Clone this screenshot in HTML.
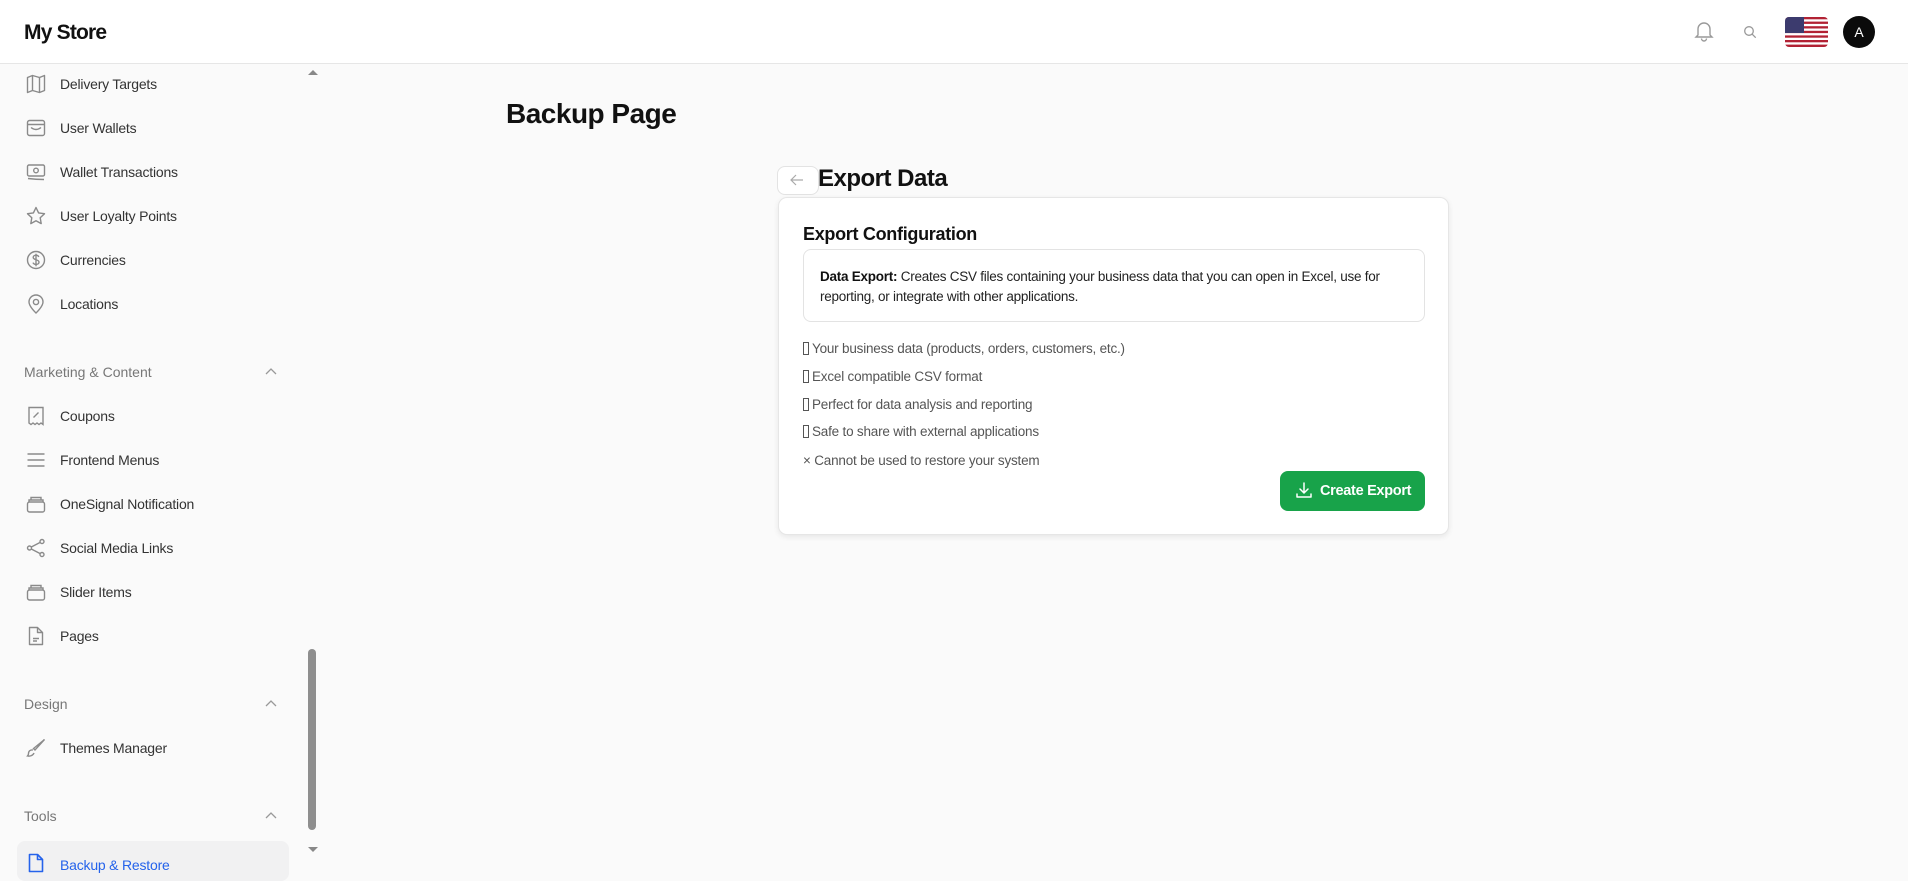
<!DOCTYPE html>
<html><head><meta charset="utf-8"><style>
*{margin:0;padding:0;box-sizing:border-box}
body{width:1908px;height:860px;overflow:hidden;background:#fafafa;font-family:"Liberation Sans",sans-serif;color:#222;position:relative}
.a{position:absolute;white-space:nowrap}
.hdr{left:0;top:0;width:1908px;height:64px;background:#fff;border-bottom:1px solid #e6e6e6}
.logo{left:24px;top:21px;font-size:21px;font-weight:bold;color:#111;letter-spacing:-0.8px}
.side{left:0;top:64px;width:305px;height:796px;background:#fafafa}
.sb{left:305px;top:64px;width:16px;height:796px;background:#fafafa}
.it{left:60px;font-size:14px;color:#333;letter-spacing:-0.2px;line-height:18px}
.ic{left:26px;width:20px;height:20px}
.sec{left:24px;font-size:14px;color:#777;line-height:18px}
.chev{left:264px;width:14px;height:10px}
.li{left:803px;font-size:13.5px;color:#555;line-height:18px;letter-spacing:-0.2px}
.box{display:inline-block;width:6px;height:13px;border:1px solid #555;vertical-align:-2px;margin-right:3px}
</style></head><body>
<div class="a hdr"></div>
<div class="a logo">My Store</div>
<svg class="a" style="left:1694px;top:20px" width="20" height="22" viewBox="0 0 20 22" fill="none" stroke="#999" stroke-width="1.4"><path d="M4 15V9a6 6 0 0 1 12 0v6l2 2H2z"/><path d="M7.5 18.5a2.5 2.5 0 0 0 5 0"/></svg>
<svg class="a" style="left:1743px;top:25px" width="14" height="14" viewBox="0 0 14 14" fill="none" stroke="#999" stroke-width="1.3"><circle cx="6" cy="6" r="4.3"/><path d="M9.2 9.2l3.5 3.5"/></svg>
<svg class="a" style="left:1785px;top:17px" width="43" height="30" viewBox="0 0 43 30"><defs><clipPath id="fc"><rect width="43" height="30" rx="4"/></clipPath></defs><g clip-path="url(#fc)"><rect width="43" height="30" fill="#fff"/><g fill="#b22234"><rect y="0" width="43" height="2.3"/><rect y="4.6" width="43" height="2.3"/><rect y="9.2" width="43" height="2.3"/><rect y="13.8" width="43" height="2.3"/><rect y="18.4" width="43" height="2.3"/><rect y="23" width="43" height="2.3"/><rect y="27.6" width="43" height="2.4"/></g><rect width="19" height="16" fill="#3c3b6e"/></g></svg>
<div class="a" style="left:1843px;top:16px;width:32px;height:32px;border-radius:50%;background:#0b0b0b;color:#fff;font-size:14px;text-align:center;line-height:32px">A</div>

<div class="a side"></div>
<div class="a sb"></div>
<div class="a" style="left:308px;top:70px;width:0;height:0;border-left:5px solid transparent;border-right:5px solid transparent;border-bottom:5px solid #888"></div>
<div class="a" style="left:308px;top:847px;width:0;height:0;border-left:5px solid transparent;border-right:5px solid transparent;border-top:5px solid #888"></div>
<div class="a" style="left:308px;top:649px;width:8px;height:181px;border-radius:4px;background:#8e8e8e"></div>

<svg class="a ic" style="top:74px" viewBox="0 0 20 20" fill="none" stroke="#8a8a8a" stroke-width="1.4" stroke-linejoin="round"><path d="M1.5 3.5l5-2 7 2 5-2v15l-5 2-7-2-5 2z"/><path d="M6.5 1.5v15M13.5 3.5v15"/></svg>
<div class="a it" style="top:75px">Delivery Targets</div>
<svg class="a ic" style="top:118px" viewBox="0 0 20 20" fill="none" stroke="#8a8a8a" stroke-width="1.4"><rect x="1.5" y="2.5" width="17" height="15" rx="2"/><path d="M1.5 6.5h17M5 9.5q5 4 10 0"/></svg>
<div class="a it" style="top:119px">User Wallets</div>
<svg class="a ic" style="top:162px" viewBox="0 0 20 20" fill="none" stroke="#8a8a8a" stroke-width="1.4"><rect x="1.5" y="3" width="17" height="11" rx="1.5"/><circle cx="10" cy="8.5" r="2.3"/><path d="M2 16.5q8 1 16 1"/></svg>
<div class="a it" style="top:163px">Wallet Transactions</div>
<svg class="a ic" style="top:206px" viewBox="0 0 20 20" fill="none" stroke="#8a8a8a" stroke-width="1.4" stroke-linejoin="round"><path d="M10 1.5l2.6 5.4 5.9.8-4.3 4.1 1 5.8L10 14.8l-5.2 2.8 1-5.8L1.5 7.7l5.9-.8z"/></svg>
<div class="a it" style="top:207px">User Loyalty Points</div>
<svg class="a ic" style="top:250px" viewBox="0 0 20 20" fill="none" stroke="#8a8a8a" stroke-width="1.4"><circle cx="10" cy="10" r="8.5"/><path d="M12.8 7c-.5-1.3-1.6-1.8-2.8-1.8-1.6 0-2.8.9-2.8 2.2 0 3 5.8 1.7 5.8 4.8 0 1.3-1.300 2.2-3 2.2-1.3 0-2.5-.6-3-1.8M10 3.8v12.4"/></svg>
<div class="a it" style="top:251px">Currencies</div>
<svg class="a ic" style="top:294px" viewBox="0 0 20 20" fill="none" stroke="#8a8a8a" stroke-width="1.4"><path d="M10 19s-7-6.5-7-11a7 7 0 0 1 14 0c0 4.5-7 11-7 11z"/><circle cx="10" cy="8" r="2.6"/></svg>
<div class="a it" style="top:295px">Locations</div>

<div class="a sec" style="top:363px">Marketing &amp; Content</div>
<svg class="a chev" style="top:367px" viewBox="0 0 14 10" fill="none" stroke="#999" stroke-width="1.3"><path d="M2 7l5-5 5 5"/></svg>

<svg class="a ic" style="top:406px" viewBox="0 0 20 20" fill="none" stroke="#8a8a8a" stroke-width="1.4"><path d="M3 1.5h14v17l-2-1.5-2 1.5-2-1.5-2 1.5-2-1.5-2 1.5-2-1.5z"/><path d="M7.5 11.5l5-5M7.5 7h.1M12.5 11h.1"/></svg>
<div class="a it" style="top:407px">Coupons</div>
<svg class="a ic" style="top:450px" viewBox="0 0 20 20" fill="none" stroke="#8a8a8a" stroke-width="1.4"><path d="M1.5 4h17M1.5 10h17M1.5 16h17"/></svg>
<div class="a it" style="top:451px">Frontend Menus</div>
<svg class="a ic" style="top:494px" viewBox="0 0 20 20" fill="none" stroke="#8a8a8a" stroke-width="1.4"><rect x="1.5" y="8" width="17" height="10" rx="2"/><path d="M3 8V6h14v2M5 6V3.5h10V6"/></svg>
<div class="a it" style="top:495px">OneSignal Notification</div>
<svg class="a ic" style="top:538px" viewBox="0 0 20 20" fill="none" stroke="#8a8a8a" stroke-width="1.4"><circle cx="16" cy="3.5" r="2"/><circle cx="3.5" cy="10" r="2"/><circle cx="16" cy="16.5" r="2"/><path d="M5.3 9l8.9-4.6M5.3 11l8.9 4.6"/></svg>
<div class="a it" style="top:539px">Social Media Links</div>
<svg class="a ic" style="top:582px" viewBox="0 0 20 20" fill="none" stroke="#8a8a8a" stroke-width="1.4"><rect x="1.5" y="8" width="17" height="10" rx="2"/><path d="M3 8V6h14v2M5 6V3.5h10V6"/></svg>
<div class="a it" style="top:583px">Slider Items</div>
<svg class="a ic" style="top:626px" viewBox="0 0 20 20" fill="none" stroke="#8a8a8a" stroke-width="1.4" stroke-linejoin="round"><path d="M3.5 1.5h8l5 5v12h-13z"/><path d="M11.5 1.5v5h5M7 12.5h6M7 15h4"/></svg>
<div class="a it" style="top:627px">Pages</div>

<div class="a sec" style="top:695px">Design</div>
<svg class="a chev" style="top:699px" viewBox="0 0 14 10" fill="none" stroke="#999" stroke-width="1.3"><path d="M2 7l5-5 5 5"/></svg>
<svg class="a ic" style="top:738px" viewBox="0 0 20 20" fill="none" stroke="#8a8a8a" stroke-width="1.4"><path d="M18.5 1.5L9 12l-1.5-1.5z"/><path d="M7 12c-2.5-.5-4.5 1-4.5 3.5 0 1-.5 2-1 2.5 2.5.5 5.5-.5 6.5-3"/></svg>
<div class="a it" style="top:739px">Themes Manager</div>

<div class="a sec" style="top:807px">Tools</div>
<svg class="a chev" style="top:811px" viewBox="0 0 14 10" fill="none" stroke="#999" stroke-width="1.3"><path d="M2 7l5-5 5 5"/></svg>
<div class="a" style="left:17px;top:841px;width:272px;height:40px;border-radius:8px;background:#f1f1f2"></div>
<svg class="a ic" style="top:853px" viewBox="0 0 20 20" fill="none" stroke="#2563eb" stroke-width="1.6" stroke-linejoin="round"><path d="M3.5 1.5h8l5 5v12h-13z"/><path d="M11.5 1.5v5h5"/></svg>
<div class="a it" style="top:856px;color:#2563eb">Backup &amp; Restore</div>

<div class="a" style="left:506px;top:98px;font-size:28px;font-weight:bold;color:#111;letter-spacing:-0.5px;line-height:32px">Backup Page</div>
<div class="a" style="left:777px;top:166px;width:42px;height:29px;border:1px solid #e3e3e3;border-radius:8px;background:#fff"></div>
<svg class="a" style="left:789px;top:173px" width="16" height="14" viewBox="0 0 16 14" fill="none" stroke="#aaa" stroke-width="1.2"><path d="M14 7H2M7 2L2 7l5 5"/></svg>
<div class="a" style="left:818px;top:165px;font-size:24px;font-weight:bold;color:#111;letter-spacing:-0.5px;line-height:28px">Export Data</div>

<div class="a" style="left:778px;top:197px;width:671px;height:338px;background:#fff;border:1px solid #e6e6e6;border-radius:9px;box-shadow:0 2px 6px rgba(0,0,0,0.08)"></div>
<div class="a" style="left:803px;top:223px;font-size:18px;font-weight:bold;color:#111;letter-spacing:-0.3px;line-height:22px">Export Configuration</div>
<div class="a" style="left:803px;top:249px;width:622px;height:73px;border:1px solid #e3e3e3;border-radius:8px;background:#fff"></div>
<div class="a" style="left:820px;top:267px;font-size:13.5px;line-height:20px;color:#222;letter-spacing:-0.25px"><b style="color:#111">Data Export:</b> Creates CSV files containing your business data that you can open in Excel, use for<br>reporting, or integrate with other applications.</div>

<div class="a li" style="top:340px"><span class="box"></span>Your business data (products, orders, customers, etc.)</div>
<div class="a li" style="top:368px"><span class="box"></span>Excel compatible CSV format</div>
<div class="a li" style="top:396px"><span class="box"></span>Perfect for data analysis and reporting</div>
<div class="a li" style="top:423px"><span class="box"></span>Safe to share with external applications</div>
<div class="a li" style="top:452px">× Cannot be used to restore your system</div>

<div class="a" style="left:1280px;top:471px;width:145px;height:40px;border-radius:8px;background:#18a34a"></div>
<svg class="a" style="left:1295px;top:481px" width="18" height="18" viewBox="0 0 18 18" fill="none" stroke="#fff" stroke-width="1.5" stroke-linecap="round" stroke-linejoin="round"><path d="M9 2v10M5 8l4 4 4-4M2 13v3h14v-3"/></svg>
<div class="a" style="left:1320px;top:482px;font-size:14.5px;font-weight:bold;color:#fff;line-height:18px;letter-spacing:-0.3px">Create Export</div>
</body></html>
